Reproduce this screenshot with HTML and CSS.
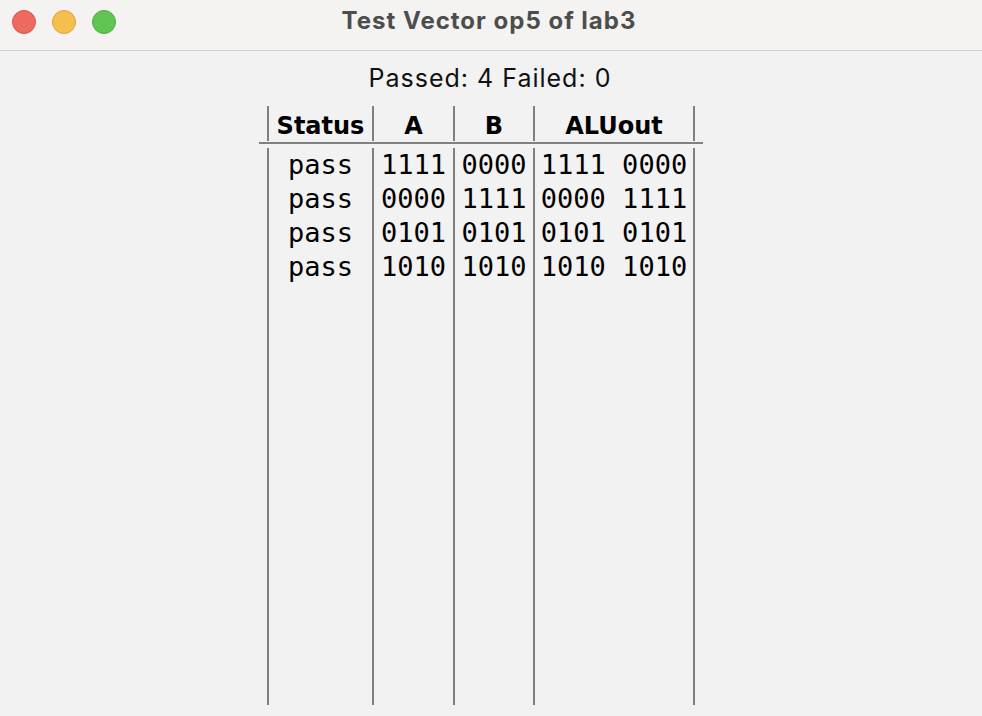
FILE: index.html
```html
<!DOCTYPE html>
<html>
<head>
<meta charset="utf-8">
<link rel="stylesheet" href="styles.css">
</head>
<body>
<div class="window">
  <div class="titlebar">
    <div class="lights">
      <span class="light red"></span>
      <span class="light yellow"></span>
      <span class="light green"></span>
    </div>
    <div class="title">Test Vector op5 of lab3</div>
    <div></div>
  </div>
  <div class="content">
    <div class="summary">Passed: 4 Failed: 0</div>
    <div class="table">
      <div class="head">
        <div class="col c1">Status</div>
        <div class="col c2">A</div>
        <div class="col c3">B</div>
        <div class="col c4 last">ALUout</div>
      </div>
      <div class="rule"></div>
      <div class="body">
        <div class="col c1">
          <div class="cell">pass</div><div class="cell">pass</div><div class="cell">pass</div><div class="cell">pass</div>
        </div>
        <div class="col c2">
          <div class="cell">1111</div><div class="cell">0000</div><div class="cell">0101</div><div class="cell">1010</div>
        </div>
        <div class="col c3">
          <div class="cell">0000</div><div class="cell">1111</div><div class="cell">0101</div><div class="cell">1010</div>
        </div>
        <div class="col c4 last">
          <div class="cell">1111 0000</div><div class="cell">0000 1111</div><div class="cell">0101 0101</div><div class="cell">1010 1010</div>
        </div>
      </div>
    </div>
  </div>
</div>
</body>
</html>
```
FILE: styles.css
```css
html, body {
  margin: 0;
  padding: 0;
}
body {
  background: #f2f2f2;
  width: 982px;
  height: 716px;
  overflow: hidden;
}
.window {
  display: flex;
  flex-direction: column;
}
.titlebar {
  height: 50px;
  background: #f4f3f1;
  border-bottom: 1px solid #d0d0d0;
  display: grid;
  grid-template-columns: 1fr auto 1fr;
  align-items: start;
}
.lights {
  display: flex;
  gap: 16px;
  padding: 10px 0 0 12px;
}
.light {
  width: 24px;
  height: 24px;
  border-radius: 50%;
  box-sizing: border-box;
}
.red { background: #ee6a5f; border: 1px solid #d9544a; }
.yellow { background: #f5bf4f; border: 1px solid #dea23b; }
.green { background: #61c554; border: 1px solid #4eaa41; }
.title {
  font-family: Inter, "Liberation Sans", sans-serif;
  font-weight: 700;
  font-size: 24px;
  letter-spacing: 1px;
  line-height: 28px;
  color: #4d4d4d;
  margin-top: 7px;
  margin-left: -4px;
}
.content {
  display: flex;
  flex-direction: column;
  align-items: flex-start;
}
.summary {
  align-self: center;
  margin-top: 12px;
  margin-left: -2px;
  height: 30px;
  font-family: Inter, "Liberation Sans", sans-serif;
  font-size: 25px;
  letter-spacing: 1px;
  line-height: 30px;
  color: #111;
}
.table {
  margin-top: 13px;
  margin-left: 259px;
  width: 444px;
  display: flex;
  flex-direction: column;
}
.head, .body {
  display: flex;
  padding-left: 8px;
}
.col {
  border-left: 2px solid #808080;
  text-align: center;
  box-sizing: border-box;
  color: #000;
}
.col.last {
  border-right: 2px solid #808080;
}
.c1 { width: 105px; }
.c2 { width: 81px; }
.c3 { width: 80px; }
.c4 { width: 162px; }
.head .col {
  height: 35px;
  padding-top: 5px;
  line-height: 30px;
  font-family: "DejaVu Sans", sans-serif;
  font-weight: 700;
  font-size: 24px;
}
.rule {
  margin-top: 1px;
  height: 2px;
  background: #808080;
  margin-bottom: 4px;
}
.body .col {
  height: 557px;
  font-family: "DejaVu Sans Mono", monospace;
  font-size: 27px;
  line-height: 34px;
}
.cell {
  white-space: pre;
}
```
